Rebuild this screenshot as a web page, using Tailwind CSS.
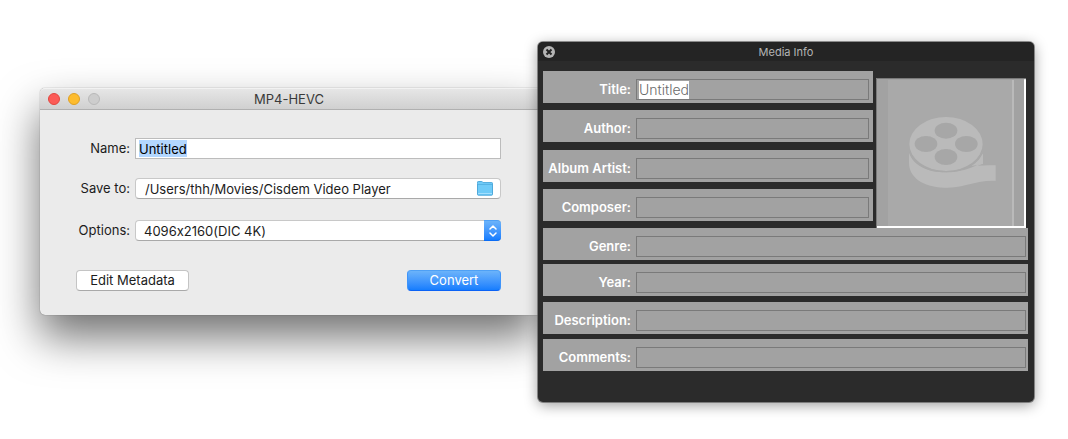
<!DOCTYPE html>
<html lang="en">
<head>
    <meta charset="UTF-8">
    <meta name="viewport" content="width=device-width, initial-scale=1.0">
    <title>MP4-HEVC</title>
    <script src="https://cdn.jsdelivr.net/npm/@tailwindcss/browser@4"></script>
</head>
<body class="bg-white font-['Inter','Liberation_Sans',sans-serif] text-[13px] leading-4 text-[#1c1c1c] [font-variant-ligatures:no-contextual]">
    <main class="flex items-start pl-10 pr-[34px] pt-[42px] pb-9">

        <!-- Convert window -->
        <section class="mt-[46px] w-[498px] rounded-l-[5px] bg-[#ebebeb] shadow-[0_0_1px_rgba(0,0,0,0.6),0_22px_44px_rgba(0,0,0,0.56)]">
            <header class="grid h-[22px] grid-cols-[1fr_auto_1fr] items-center rounded-tl-[5px] border-t border-b border-t-[#f2f2f2] border-b-[#b0b0b0] bg-linear-to-b from-[#e6e6e6] to-[#d0d0d0] px-2">
                <div class="flex gap-2">
                    <button type="button" aria-label="Close" class="size-3 rounded-full border border-[#e2463f] bg-[#fc5b57]"></button>
                    <button type="button" aria-label="Minimize" class="size-3 rounded-full border border-[#dfa023] bg-[#fdbc2e]"></button>
                    <button type="button" aria-label="Zoom" disabled class="size-3 rounded-full border border-[#b9b9b9] bg-[#cdcdcd]"></button>
                </div>
                <h1 class="text-[#3a3a3a]">MP4-HEVC</h1>
            </header>

            <form class="pt-7 pr-[37px] pb-6 pl-9">
                <div class="grid grid-cols-[54px_1fr] items-center gap-x-[5px]">
                    <label for="name" class="pb-[2px] text-right whitespace-nowrap">Name:</label>
                    <div class="flex h-[21px] items-center border border-[#bcbcbc] bg-white pl-[3px]">
                        <input id="name" type="text" value="Untitled" class="field-sizing-content h-[17px] bg-[#b3d7ff] text-black outline-none">
                    </div>

                    <label for="saveTo" class="mt-[19px] pb-[2px] text-right whitespace-nowrap">Save to:</label>
                    <div class="mt-[19px] flex h-[21px] items-center rounded-[4px] border border-[#c8c8c8] border-b-[#a9a9a9] bg-white pr-[7px] pl-[9px]">
                        <input id="saveTo" type="text" value="/Users/thh/Movies/Cisdem Video Player" class="min-w-0 flex-1 bg-transparent outline-none">
                        <button type="button" aria-label="Choose folder">
                            <svg class="block h-[15px] w-4" viewBox="0 0 16 15">
                                <path d="M.5 2.5V1.2Q.5.5 1.2.5h3.6q.5 0 .8.5l.5.6h8.7q.7 0 .7.7V13.5q0 .7-.7.7H1.2q-.7 0-.7-.7z" fill="#6fcbf8" stroke="#4fa9db"/>
                                <path d="M1 3.5h14" stroke="#57b4e4"/>
                                <path d="M1 12.5h14" stroke="#a4e0ff"/>
                            </svg>
                        </button>
                    </div>

                    <label for="options" class="mt-[21px] pb-[2px] text-right whitespace-nowrap">Options:</label>
                    <div class="relative mt-[21px]">
                        <select id="options" class="block h-[21px] w-full appearance-none rounded-[4px] border border-[#c8c8c8] border-b-[#a9a9a9] bg-white pl-2 outline-none">
                            <option>4096x2160(DIC 4K)</option>
                        </select>
                        <span class="pointer-events-none absolute inset-y-0 right-0 flex w-[17px] items-center justify-center rounded-r-[4px] border-t border-b border-t-[#4ea0f5] border-b-[#0a6cf5] bg-linear-to-b from-[#6bb3fa] to-[#147dfe]">
                            <svg class="h-3 w-2" viewBox="0 0 8 12" fill="none" stroke="#fff" stroke-width="1.5" stroke-linecap="round" stroke-linejoin="round">
                                <path d="M1 4l3-3 3 3M1 8l3 3 3-3"/>
                            </svg>
                        </span>
                    </div>
                </div>

                <div class="mt-[29px] flex justify-between">
                    <button type="button" class="h-[21px] w-[113px] rounded-[4px] border border-[#c4c4c4] border-b-[#a9a9a9] bg-white leading-[19px]">Edit Metadata</button>
                    <button type="submit" class="h-[21px] w-[94px] rounded-[4px] border border-t-[#4ea0f5] border-r-[#3e94fa] border-b-[#0a62f5] border-l-[#3e94fa] bg-linear-to-b from-[#6bb3fa] to-[#147dfe] leading-[19px] text-white">Convert</button>
                </div>
            </form>
        </section>

        <!-- Media info panel -->
        <section class="relative flex-1 rounded-[5px] bg-[#2b2b2b] pb-[31px] shadow-[0_0_0_1px_rgba(80,80,80,0.6),0_3px_14px_rgba(0,0,0,0.4)]">
            <header class="grid h-[19px] grid-cols-[1fr_auto_1fr] items-center rounded-t-[5px] bg-[#242424] px-[5px]">
                <button type="button" aria-label="Close" class="size-3">
                    <svg class="block size-3" viewBox="0 0 12 12">
                        <circle cx="6" cy="6" r="6" fill="#b5b5b5"/>
                        <path d="M3.5 3.5l5 5M8.5 3.5l-5 5" stroke="#242424" stroke-width="2"/>
                    </svg>
                </button>
                <h2 class="text-[11px] text-[#b4b4b4]">Media Info</h2>
            </header>

            <form class="pt-[10px] pr-[6px] pl-[5px] font-semibold text-white">
                <div class="flex">
                    <div class="flex-1">
                        <div class="flex h-8 items-start bg-[#a2a2a2] pt-2 pr-1">
                            <label for="title" class="w-[93px] pr-[5px] text-right leading-5">Title:</label>
                            <div class="flex h-[21px] min-w-0 flex-1 items-center border border-[#7a7a7a] pl-[2px]">
                                <input id="title" type="text" value="Untitled" class="field-sizing-content h-[18px] bg-white text-[14px] font-light text-[#6a6a6a] outline-none">
                            </div>
                        </div>
                        <div class="mt-[7px] flex h-8 items-start bg-[#a2a2a2] pt-2 pr-1">
                            <label for="author" class="w-[93px] pr-[5px] text-right leading-5">Author:</label>
                            <input id="author" type="text" class="h-[21px] min-w-0 flex-1 border border-[#7a7a7a] outline-none">
                        </div>
                        <div class="mt-2 flex h-8 items-start bg-[#a2a2a2] pt-2 pr-1">
                            <label for="albumArtist" class="w-[93px] pr-[5px] text-right leading-5 whitespace-nowrap">Album Artist:</label>
                            <input id="albumArtist" type="text" class="h-[21px] min-w-0 flex-1 border border-[#7a7a7a] outline-none">
                        </div>
                        <div class="mt-[7px] flex h-8 items-start bg-[#a2a2a2] pt-2 pr-1">
                            <label for="composer" class="w-[93px] pr-[5px] text-right leading-5">Composer:</label>
                            <input id="composer" type="text" class="h-[21px] min-w-0 flex-1 border border-[#7a7a7a] outline-none">
                        </div>
                    </div>

                    <!-- Artwork placeholder -->
                    <svg class="mt-[7px] mr-[2px] ml-[3px] block size-[150px]" viewBox="0 0 450 450" role="img" aria-label="Artwork">
                        <rect width="450" height="450" fill="#a2a2a2"/>
                        <rect x="36" y="6" width="372" height="438" fill="#a9a9a9"/>
                        <rect x="408" y="6" width="6" height="438" fill="#bababa"/>
                        <g fill="#bababa">
                            <path d="M99 224C112 262 154 283 210 283C250 283 285 272 321 252V229V256Q313 261 304 263Q325 261 359 262V308C325 307 300 313 270 321C245 328 225 330 204 329C140 326 99 298 99 254z"/>
                            <path d="M321 226V258L286 264Q308 250 321 226z"/>
                            <ellipse cx="210" cy="198" rx="110" ry="81"/>
                        </g>
                        <path d="M100 216C106 252 150 281 210 281C268 281 312 254 320 214" fill="none" stroke="#a9a9a9" stroke-width="4"/>
                        <g fill="#a7a7a7">
                            <ellipse cx="210" cy="158" rx="34" ry="24"/>
                            <ellipse cx="150" cy="198" rx="34" ry="24"/>
                            <ellipse cx="271" cy="198" rx="34" ry="24"/>
                            <ellipse cx="210" cy="237" rx="34" ry="24"/>
                        </g>
                        <path d="M1.5 450V1.5H450" fill="none" stroke="#7a7a7a" stroke-width="3"/>
                        <path d="M3 447H447V4" fill="none" stroke="#fff" stroke-width="6"/>
                    </svg>
                </div>

                <div class="flex h-8 items-start bg-[#a2a2a2] pt-2 pr-[2px]">
                    <label for="genre" class="w-[93px] pr-[5px] text-right leading-5">Genre:</label>
                    <input id="genre" type="text" class="h-[21px] min-w-0 flex-1 border border-[#7a7a7a] outline-none">
                </div>
                <div class="mt-1 flex h-8 items-start bg-[#a2a2a2] pt-2 pr-[2px]">
                    <label for="year" class="w-[93px] pr-[5px] text-right leading-5">Year:</label>
                    <input id="year" type="text" class="h-[21px] min-w-0 flex-1 border border-[#7a7a7a] outline-none">
                </div>
                <div class="mt-[6px] flex h-8 items-start bg-[#a2a2a2] pt-2 pr-[2px]">
                    <label for="description" class="w-[93px] pr-[5px] text-right leading-5">Description:</label>
                    <input id="description" type="text" class="h-[21px] min-w-0 flex-1 border border-[#7a7a7a] outline-none">
                </div>
                <div class="mt-[5px] flex h-8 items-start bg-[#a2a2a2] pt-2 pr-[2px]">
                    <label for="comments" class="w-[93px] pr-[5px] text-right leading-5">Comments:</label>
                    <input id="comments" type="text" class="h-[21px] min-w-0 flex-1 border border-[#7a7a7a] outline-none">
                </div>
            </form>
        </section>
    </main>
</body>
</html>
